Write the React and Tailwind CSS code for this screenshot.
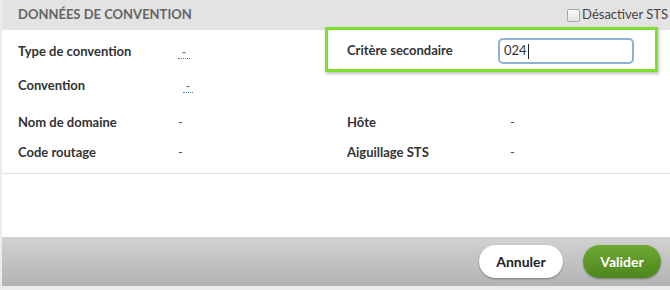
export default function App() {
  const label = "text-[13px] font-bold text-[#333]";
  const val = "text-[13px] text-[#555]";
  return (
    <div className="w-[670px] h-[290px] bg-[#ececec] pl-[2px] overflow-hidden relative" style={{ fontFamily: "Lato, 'Open Sans', sans-serif" }}>
      <div className="h-[30px] bg-[#e3e3e3] flex items-center justify-between pl-[16px] pr-[2px]">
        <div className="text-[13px] font-bold text-[#666]">DONNÉES DE CONVENTION</div>
        <label className="flex items-center gap-[2px] text-[13px] text-[#444]">
          <span className="w-[13px] h-[13px] rounded-[2px] border border-[#a8a8a8] bg-gradient-to-b from-[#fafafa] to-[#e4e4e4]"></span>
          Désactiver STS
        </label>
      </div>
      <div className="bg-white h-[207px] flex flex-col">
        <div className="pl-[16px] pt-[7px]">
          <div className="h-[30px] grid grid-cols-[160px_169px_151px_1fr] items-center">
            <span className={label}>Type de convention</span>
            <span className="text-[13px] text-[#3a7fc0] border-b border-dotted border-[#3a7fc0] w-[12px] leading-[12px] text-center">-</span>
            <span></span>
            <span></span>
          </div>
          <div className="h-[30px] mt-[4px] grid grid-cols-[160px_169px_151px_1fr] items-center">
            <span className={label}>Convention</span>
            <span className="ml-[5px] text-[13px] text-[#3a7fc0] border-b border-dotted border-[#3a7fc0] w-[10px] leading-[12px] text-center">-</span>
            <span></span>
            <span></span>
          </div>
          <div className="h-[30px] mt-[7px] grid grid-cols-[160px_169px_163px_1fr] items-center">
            <span className={label}>Nom de domaine</span>
            <span className={val}>-</span>
            <span className={label}>Hôte</span>
            <span className={val}>-</span>
          </div>
          <div className="h-[30px] grid grid-cols-[160px_169px_163px_1fr] items-center">
            <span className={label}>Code routage</span>
            <span className={val}>-</span>
            <span className={label}>Aiguillage STS</span>
            <span className={val}>-</span>
          </div>
        </div>
        <div className="mt-[5px] h-px bg-[#e2e2e2]"></div>
      </div>
      <div className="h-[49px] bg-gradient-to-b from-[#d2d2d2] to-[#b3b3b3] flex items-center justify-end gap-[20px] pr-[9px]">
        <button className="w-[84px] h-[33px] rounded-full bg-white text-[14px] font-bold text-[#222] shadow-[0_1px_2px_rgba(0,0,0,0.35)]">Annuler</button>
        <button className="w-[78px] h-[33px] rounded-full bg-gradient-to-b from-[#6ea932] to-[#4d861c] text-[14px] font-bold text-white shadow-[0_1px_2px_rgba(0,0,0,0.35)]">Valider</button>
      </div>
      <div className="absolute left-[325px] top-[27px] w-[333px] h-[45px] border-[3px] border-[#7ee22c] bg-white shadow-[1px_2px_3px_rgba(0,0,0,0.25)] flex items-center pt-[3px]">
        <span className="ml-[19px] w-[151px] text-[13px] font-bold text-[#333]">Critère secondaire</span>
        <div className="w-[136px] h-[26px] border-2 border-[#8db2d3] rounded-[5px] flex items-center pl-[4px] text-[13px] text-[#333]">
          024<span className="w-px h-[15px] bg-[#222] ml-px"></span>
        </div>
      </div>
    </div>
  );
}
